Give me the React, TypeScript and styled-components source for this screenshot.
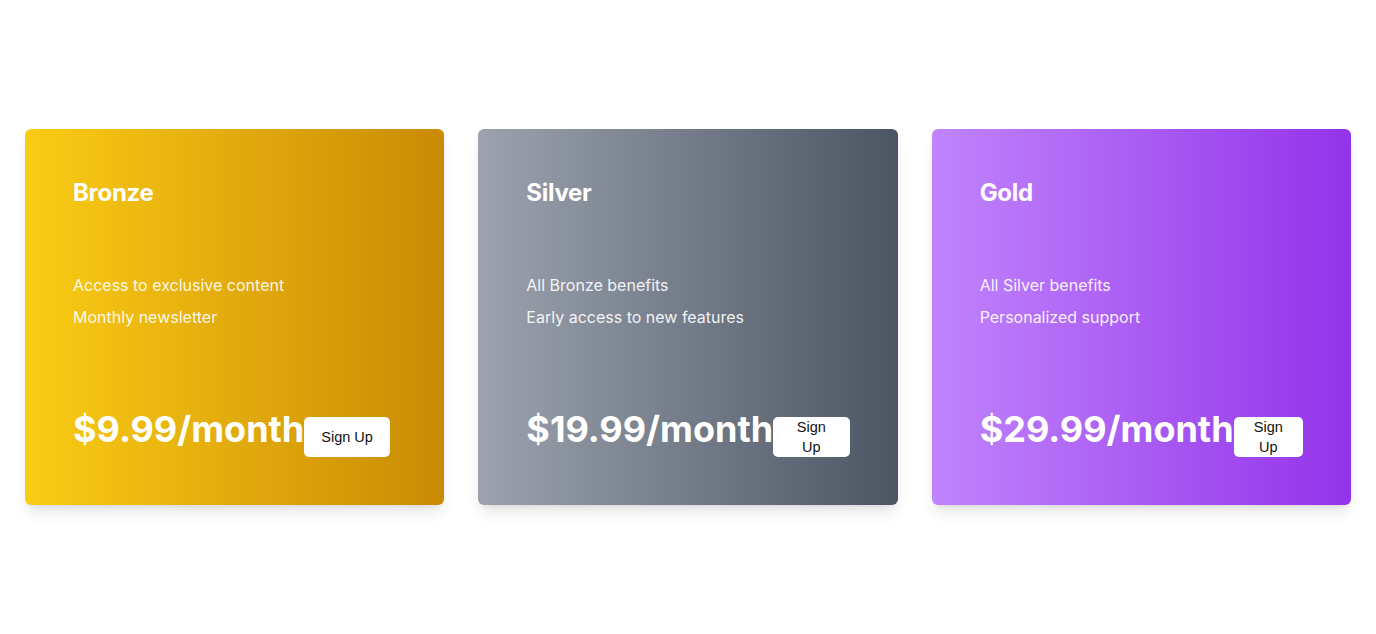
import React from "react";
import styled, { createGlobalStyle } from "styled-components";

const GlobalStyle = createGlobalStyle`
  html, body {
    margin: 0;
    padding: 0;
    background: #ffffff;
  }
  body {
    font-family: Inter, "Noto Sans", sans-serif;
  }
  * { box-sizing: border-box; }
`;

const Page = styled.div`
  min-height: 634px;
  display: flex;
  align-items: center;
  padding: 0 25px;
`;

const Grid = styled.div`
  width: 100%;
  display: grid;
  grid-template-columns: repeat(3, 1fr);
  gap: 34px;
`;

const Card = styled.div<{ $from: string; $to: string }>`
  display: flex;
  flex-direction: column;
  padding: 48px;
  border-radius: 6px;
  color: #ffffff;
  background: linear-gradient(to right, ${(p) => p.$from}, ${(p) => p.$to});
  box-shadow: 0 10px 15px -3px rgba(0, 0, 0, 0.1), 0 4px 6px -4px rgba(0, 0, 0, 0.1);
`;

const Title = styled.h2`
  margin: 0 0 64px;
  font-size: 24px;
  line-height: 32px;
  font-weight: 700;
  letter-spacing: -0.3px;
`;

const Features = styled.ul`
  list-style: none;
  margin: 0 0 80px;
  padding: 0;
  display: flex;
  flex-direction: column;
  gap: 8px;
`;

const Feature = styled.li`
  font-size: 16px;
  line-height: 24px;
  color: rgba(255, 255, 255, 0.92);
`;

const PriceRow = styled.div`
  display: flex;
  align-items: flex-end;
`;

const Price = styled.span`
  font-size: 36px;
  line-height: 40px;
  font-weight: 700;
  margin-bottom: 8px;
  white-space: nowrap;
`;

const SignUp = styled.button`
  height: 40px;
  padding: 0 17px;
  border: none;
  border-radius: 5px;
  background: #ffffff;
  color: #111111;
  font-family: "Liberation Sans", Arial, sans-serif;
  font-size: 14.5px;
  line-height: 20px;
  cursor: pointer;
`;

const plans = [
  {
    name: "Bronze",
    features: ["Access to exclusive content", "Monthly newsletter"],
    price: "$9.99/month",
    from: "#facc15",
    to: "#ca8a04",
  },
  {
    name: "Silver",
    features: ["All Bronze benefits", "Early access to new features"],
    price: "$19.99/month",
    from: "#9ca3af",
    to: "#4b5563",
  },
  {
    name: "Gold",
    features: ["All Silver benefits", "Personalized support"],
    price: "$29.99/month",
    from: "#c084fc",
    to: "#9333ea",
  },
];

export default function App() {
  return (
    <>
      <GlobalStyle />
      <Page>
        <Grid>
          {plans.map((p) => (
            <Card key={p.name} $from={p.from} $to={p.to}>
              <Title>{p.name}</Title>
              <Features>
                {p.features.map((f) => (
                  <Feature key={f}>{f}</Feature>
                ))}
              </Features>
              <PriceRow>
                <Price>{p.price}</Price>
                <SignUp>Sign Up</SignUp>
              </PriceRow>
            </Card>
          ))}
        </Grid>
      </Page>
    </>
  );
}
